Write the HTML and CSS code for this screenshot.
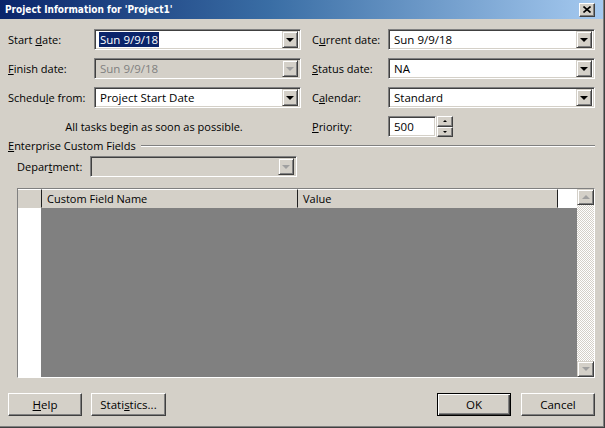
FILE: index.html
```html
<!DOCTYPE html>
<html>
<head>
<meta charset="utf-8">
<link rel="stylesheet" href="styles.css">
</head>
<body>
<div class="window">
  <div class="titlebar">
    <span class="title">Project Information for 'Project1'</span>
    <span class="close"><svg width="8" height="7" viewBox="0 0 8 7"><path d="M0.5 0.5 L7.5 6.5 M7.5 0.5 L0.5 6.5" stroke="#000" stroke-width="1.6" fill="none"/></svg></span>
  </div>
  <div class="content">
    <div class="form">
      <span class="lbl">Start <u>d</u>ate:</span>
      <div class="combo"><span class="val"><span class="sel">Sun 9/9/18</span></span><span class="dd"><i class="arr"></i></span></div>
      <span class="lbl rl">C<u>u</u>rrent date:</span>
      <div class="combo"><span class="val">Sun 9/9/18</span><span class="dd"><i class="arr"></i></span></div>

      <span class="lbl"><u>F</u>inish date:</span>
      <div class="combo disabled"><span class="val">Sun 9/9/18</span><span class="dd"><i class="arr"></i></span></div>
      <span class="lbl rl"><u>S</u>tatus date:</span>
      <div class="combo"><span class="val">NA</span><span class="dd"><i class="arr"></i></span></div>

      <span class="lbl">Schedu<u>l</u>e from:</span>
      <div class="combo"><span class="val">Project Start Date</span><span class="dd"><i class="arr"></i></span></div>
      <span class="lbl rl">C<u>a</u>lendar:</span>
      <div class="combo"><span class="val">Standard</span><span class="dd"><i class="arr"></i></span></div>

      <span class="note">All tasks begin as soon as possible.</span>
      <span class="lbl rl"><u>P</u>riority:</span>
      <div class="spin">
        <div class="spin-input">500</div>
        <div class="spin-btns">
          <span class="sbtn"><i class="up-s"></i></span>
          <span class="sbtn"><i class="down-s"></i></span>
        </div>
      </div>
    </div>

    <div class="group-head"><span><u>E</u>nterprise Custom Fields</span><span class="rule"></span></div>

    <div class="dept">
      <span class="dlbl">Depar<u>t</u>ment:</span>
      <div class="combo disabled dcombo"><span class="val"></span><span class="dd"><i class="arr"></i></span></div>
    </div>

    <div class="grid">
      <div class="grid-main">
        <div class="ghead">
          <span class="hc hc-row"></span>
          <span class="hc hc-name">Custom Field Name</span>
          <span class="hc hc-val">Value</span>
          <span class="hc-blank"></span>
        </div>
        <div class="gbody">
          <span class="rowcol"></span>
          <span class="empty"></span>
        </div>
      </div>
      <div class="vscroll">
        <span class="sb"><i class="up-g"></i></span>
        <span class="track"></span>
        <span class="sb"><i class="down-g"></i></span>
      </div>
    </div>

    <div class="buttons">
      <div class="left-btns">
        <span class="btn"><u>H</u>elp</span>
        <span class="btn">Stati<u>s</u>tics...</span>
      </div>
      <div class="right-btns">
        <span class="btn default">OK</span>
        <span class="btn">Cancel</span>
      </div>
    </div>
  </div>
</div>
</body>
</html>
```
FILE: styles.css
```css
* { box-sizing: border-box; }
html, body { margin: 0; padding: 0; }
body { background: #d4d0c8; width: 605px; height: 428px; overflow: hidden; }

.window {
  width: 605px;
  height: 428px;
  background: #d4d0c8;
  border-right: 1px solid #404040;
  border-bottom: 1px solid #404040;
  box-shadow: inset -1px -1px #808080;
  font-family: "Open Sans", "Noto Sans", sans-serif;
  font-size: 11px;
  color: #000;
  display: flex;
  flex-direction: column;
}

.titlebar {
  height: 19px;
  flex: none;
  background: linear-gradient(to right, #0a246a 0%, #3a6ea5 45%, #a6caf0 100%);
  display: flex;
  align-items: center;
  justify-content: space-between;
  padding: 0 8px 0 5px;
  margin-right: 1px;
}
.title {
  color: #fff;
  font-family: "DejaVu Sans Condensed", "DejaVu Sans", sans-serif;
  font-weight: bold;
  font-size: 10px;
}
.close {
  width: 16px;
  height: 14px;
  background: #d4d0c8;
  border: 1px solid;
  border-color: #fff #404040 #404040 #fff;
  box-shadow: inset -1px -1px #808080;
  display: flex;
  align-items: center;
  justify-content: center;
  padding-bottom: 1px;
}

.content {
  flex: 1;
  padding: 10px 0 0 8px;
  display: flex;
  flex-direction: column;
}

.form {
  display: grid;
  grid-template-columns: 86px 207px 87px 207px;
  grid-auto-rows: 21px;
  row-gap: 8px;
  align-items: center;
}
.lbl { white-space: nowrap; }
.rl { padding-left: 11px; }

.combo {
  height: 21px;
  background: #fff;
  border: 1px solid;
  border-color: #808080 #fff #fff #808080;
  box-shadow: inset 1px 1px #404040, inset -1px -1px #d4d0c8;
  display: flex;
  align-items: center;
  padding: 2px;
}
.combo .val {
  flex: 1;
  padding-left: 3px;
  white-space: nowrap;
  line-height: 15px;
  font-size: 11.5px;
}
.sel {
  background: #0a246a;
  color: #fff;
  padding: 0 1px;
  margin-left: -1px;
}
.dd {
  width: 16px;
  height: 17px;
  flex: none;
  background: #d4d0c8;
  border: 1px solid;
  border-color: #d4d0c8 #404040 #404040 #d4d0c8;
  box-shadow: inset 1px 1px #fff, inset -1px -1px #808080;
  display: flex;
  align-items: center;
  justify-content: center;
}
.arr {
  width: 0; height: 0;
  border-left: 4px solid transparent;
  border-right: 4px solid transparent;
  border-top: 4px solid #000;
  margin-top: 1px;
}
.combo.disabled { background: #d4d0c8; }
.combo.disabled .val { color: #808080; }
.combo.disabled .arr { border-top-color: #a0a0a0; }

.note {
  grid-column: 1 / 3;
  text-align: center;
  padding-right: 1px;
}

.spin { display: flex; align-items: center; gap: 1px; }
.spin-input {
  width: 48px;
  height: 21px;
  background: #fff;
  border: 1px solid;
  border-color: #808080 #fff #fff #808080;
  box-shadow: inset 1px 1px #404040, inset -1px -1px #d4d0c8;
  padding: 2px 0 0 5px;
  font-size: 11.5px;
  line-height: 15px;
}
.spin-btns { display: flex; flex-direction: column; height: 21px; }
.sbtn {
  width: 16px;
  height: 10.5px;
  background: #d4d0c8;
  border: 1px solid;
  border-color: #fff #404040 #404040 #fff;
  box-shadow: inset -1px -1px #808080;
  display: flex;
  align-items: center;
  justify-content: center;
}
.up-s, .down-s {
  width: 0; height: 0;
  border-left: 2px solid transparent;
  border-right: 2px solid transparent;
}
.up-s { border-bottom: 2px solid #000; }
.down-s { border-top: 2px solid #000; }

.group-head {
  margin-top: 1px;
  height: 14px;
  display: flex;
  align-items: center;
  gap: 5px;
  width: 587px;
  white-space: nowrap;
}
.rule {
  flex: 1;
  height: 2px;
  border-top: 1px solid #808080;
  border-bottom: 1px solid #fff;
  margin-top: 1px;
}

.dept {
  margin-top: 4px;
  padding-left: 9px;
  display: flex;
  align-items: center;
  height: 21px;
}
.dlbl { width: 73px; white-space: nowrap; }
.dcombo { width: 207px; }

.grid {
  margin-top: 11px;
  margin-left: 9px;
  width: 578px;
  height: 190px;
  border: 1px solid;
  border-color: #808080 #fff #fff #808080;
  display: flex;
}
.grid-main {
  flex: 1;
  display: flex;
  flex-direction: column;
}
.ghead {
  height: 19px;
  display: flex;
  flex: none;
}
.hc {
  background: #d4d0c8;
  border-top: 1px solid #fff;
  border-right: 1px solid #202020;
  border-bottom: 1px solid #d4d0c8;
  padding-left: 5px;
  line-height: 17px;
  white-space: nowrap;
}
.hc-row { width: 24px; }
.hc-name { width: 256px; }
.hc-val { width: 260px; }
.hc-blank { flex: 1; background: #fff; }
.gbody { flex: 1; display: flex; }
.rowcol { width: 23px; background: #fff; }
.empty { flex: 1; background: #808080; }

.vscroll {
  width: 17px;
  display: flex;
  flex-direction: column;
}
.sb {
  height: 16px;
  flex: none;
  background: #d4d0c8;
  border: 1px solid;
  border-color: #d4d0c8 #404040 #404040 #d4d0c8;
  box-shadow: inset 1px 1px #fff, inset -1px -1px #808080;
  display: flex;
  align-items: center;
  justify-content: center;
}
.up-g, .down-g {
  width: 0; height: 0;
  border-left: 4px solid transparent;
  border-right: 4px solid transparent;
}
.up-g { border-bottom: 4px solid #a0a0a0; }
.down-g { border-top: 4px solid #a0a0a0; }
.track {
  flex: 1;
  background-color: #d4d0c8;
  background-image: conic-gradient(#fff 25%, #d4d0c8 0 50%, #fff 0 75%, #d4d0c8 0);
  background-size: 2px 2px;
}

.buttons {
  margin-top: 15px;
  width: 587px;
  display: flex;
  justify-content: space-between;
}
.left-btns, .right-btns { display: flex; }
.left-btns { gap: 9px; }
.right-btns { gap: 10px; }
.btn {
  width: 74px;
  height: 23px;
  background: #d4d0c8;
  border: 1px solid;
  border-color: #fff #404040 #404040 #fff;
  box-shadow: inset -1px -1px #808080;
  display: flex;
  align-items: center;
  justify-content: center;
  font-size: 11.5px;
  padding-bottom: 1px;
}
.left-btns .btn + .btn { width: 75px; }
.btn.default {
  border: 1px solid #000;
  box-shadow: inset 1px 1px #fff, inset -1px -1px #404040, inset -2px -2px #808080;
}
```
